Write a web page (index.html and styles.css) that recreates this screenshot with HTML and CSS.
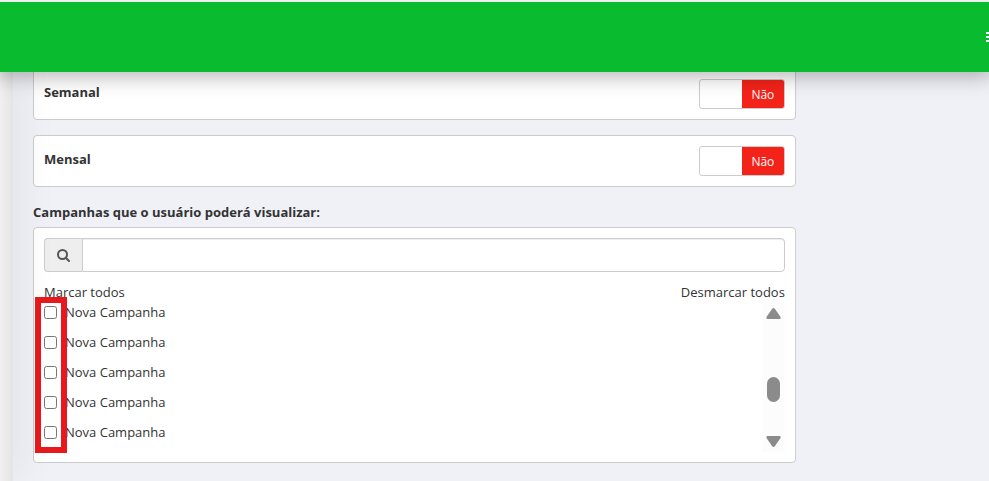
FILE: index.html
```html
<!DOCTYPE html>
<html lang="pt-BR">
<head>
  <meta charset="UTF-8">
  <meta name="viewport" content="width=device-width, initial-scale=1">
  <title>Usuário</title>
  <link rel="stylesheet" href="styles.css">
</head>
<body>

  <header class="topbar">
    <button type="button" class="menu-btn" aria-label="Menu">
      <svg width="14" height="10" viewBox="0 0 14 10" fill="#fff" shape-rendering="crispEdges">
        <path d="M0 0h14v2H0zM0 4h14v2H0zM0 8h14v2H0z"/>
      </svg>
    </button>
  </header>

  <div class="page">
    <aside class="sidebar"></aside>

    <main class="content">
      <form class="column">
        <div class="card option">
          <label class="option-label" for="semanal">Semanal</label>
          <div class="switch">
            <input type="checkbox" id="semanal" class="switch-input">
            <span class="switch-off">Não</span>
          </div>
        </div>

        <div class="card option">
          <label class="option-label" for="mensal">Mensal</label>
          <div class="switch">
            <input type="checkbox" id="mensal" class="switch-input">
            <span class="switch-off">Não</span>
          </div>
        </div>

        <label class="title" for="busca">Campanhas que o usuário poderá visualizar:</label>

        <div class="card">
          <div class="search">
            <span class="search-icon">
              <svg width="13" height="13" viewBox="0 0 13 13" fill="none" stroke="#555" stroke-width="2">
                <circle cx="5.5" cy="5.5" r="4.5"/>
                <path d="M8.7 8.7l3.3 3.3" stroke-linecap="round"/>
              </svg>
            </span>
            <input type="text" id="busca" class="search-input">
          </div>

          <div class="links">
            <a href="#">Marcar todos</a>
            <a href="#">Desmarcar todos</a>
          </div>

          <div class="campaigns">
            <div class="list">
              <label class="item"><input type="checkbox">Nova Campanha</label>
              <label class="item"><input type="checkbox">Nova Campanha</label>
              <label class="item"><input type="checkbox">Nova Campanha</label>
              <label class="item"><input type="checkbox">Nova Campanha</label>
              <label class="item"><input type="checkbox">Nova Campanha</label>
            </div>
            <div class="scrollbar">
              <svg width="15" height="11" viewBox="0 0 15 11" fill="#8b8b8b">
                <path d="M6.2.8Q7.5-.6 8.8.8L14.5 9Q15 11 13.5 11H1.5Q0 11 .5 9z"/>
              </svg>
              <span class="thumb"></span>
              <svg width="15" height="11" viewBox="0 0 15 11" fill="#8b8b8b">
                <path d="M6.2 10.2Q7.5 11.6 8.8 10.2L14.5 2Q15 0 13.5 0H1.5Q0 0 .5 2z"/>
              </svg>
            </div>
            <div class="highlight"></div>
          </div>
        </div>
      </form>
    </main>
  </div>

</body>
</html>
```

FILE: styles.css
```css
* {
  box-sizing: border-box;
}

body {
  margin: 0;
  padding-top: 68px;
  background: #f0f1f7;
  color: #333;
  font-family: "Segoe UI", "Open Sans", sans-serif;
  font-size: 13px;
  line-height: 20px;
}

.topbar {
  position: fixed;
  top: 0;
  left: 0;
  right: 0;
  z-index: 10;
  display: flex;
  align-items: center;
  justify-content: flex-end;
  height: 72px;
  overflow: hidden;
  background: #08bb2f;
  border-top: 2px solid #eff1f3;
  box-shadow: 0 0 20px 4px rgba(0, 0, 0, 0.3);
}

.menu-btn {
  display: flex;
  margin-right: -11px;
  padding: 0;
  border: none;
  background: none;
  cursor: pointer;
}

.page {
  display: flex;
  min-height: calc(100vh - 68px);
}

.sidebar {
  position: relative;
  z-index: 2;
  flex: 0 0 13px;
  background: linear-gradient(to right, #f1f1f1, #e4e4e4);
  box-shadow: 0 0 40px rgba(0, 0, 0, 0.14);
}

.content {
  flex: 1;
  padding-left: 20px;
}

.column {
  width: 79.8%;
}

.card {
  margin-bottom: 15px;
  padding: 10px;
  background: #fff;
  border: 1px solid #ccc;
  border-radius: 4px;
}

.option {
  display: flex;
  justify-content: space-between;
}

.option-label,
.title {
  font-weight: bold;
}

.option-label {
  padding-top: 3px;
}

.title {
  display: block;
  margin-bottom: 5px;
}

.switch {
  position: relative;
  display: flex;
  justify-content: flex-end;
  width: 86px;
  height: 30px;
  overflow: hidden;
  background: #fff;
  border: 1px solid #ccc;
  border-radius: 3px;
}

/* real checkbox stretched over the switch */
.switch-input {
  position: absolute;
  inset: 0;
  width: 100%;
  height: 100%;
  margin: 0;
  opacity: 0;
  cursor: pointer;
}

.switch-off {
  width: 50%;
  background: #f4231a;
  color: #fff;
  font-size: 12px;
  font-weight: 500;
  line-height: 29px;
  text-align: center;
}

.search {
  display: flex;
  height: 34px;
  margin-bottom: 10px;
}

.search-icon {
  display: flex;
  align-items: center;
  justify-content: center;
  width: 38px;
  background: #eee;
  border: 1px solid #ccc;
  border-right: none;
  border-radius: 4px 0 0 4px;
}

.search-input {
  flex: 1;
  min-width: 0;
  padding: 6px 12px;
  border: 1px solid #ccc;
  border-radius: 0 4px 4px 0;
  box-shadow: inset 0 1px 1px rgba(0, 0, 0, 0.075);
  color: #555;
  font: inherit;
}

.links {
  display: flex;
  justify-content: space-between;
}

.links a {
  color: #333;
  text-decoration: none;
}

.campaigns {
  position: relative;
  display: flex;
}

.list {
  flex: 1;
}

.item {
  display: flex;
  align-items: flex-start;
  height: 30px;
}

.item input {
  width: 13px;
  height: 13px;
  margin: 4px 8px 0 0;
}

.scrollbar {
  display: flex;
  flex-direction: column;
  align-items: center;
  justify-content: space-between;
  width: 23px;
  padding: 6px 0 5px;
  background: #fcfcfc;
}

.thumb {
  width: 13px;
  height: 25px;
  margin-top: 23px;
  background: #8b8b8b;
  border-radius: 7px;
}

/* red frame over the checkboxes */
.highlight {
  position: absolute;
  top: -5px;
  left: -9px;
  width: 32px;
  height: 156px;
  border: 6px solid #e8191c;
  pointer-events: none;
}
```
